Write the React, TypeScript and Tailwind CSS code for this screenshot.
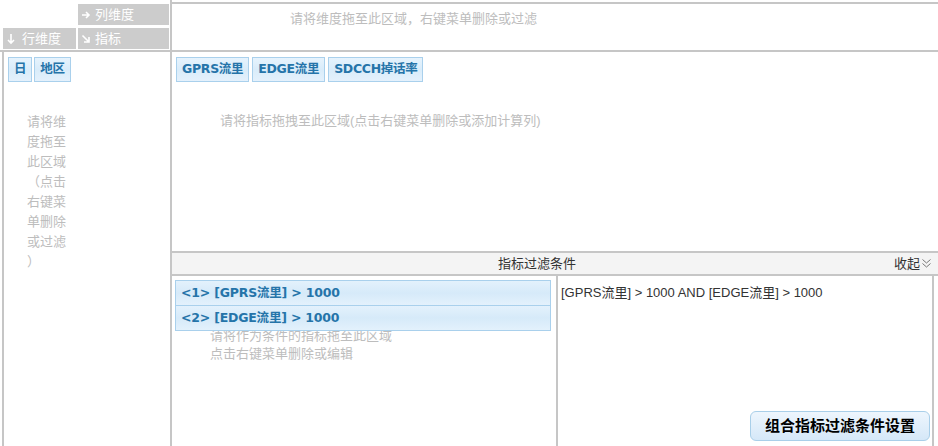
import React from "react"

const dims = ["日", "地区"]
const metrics = ["GPRS流里", "EDGE流里", "SDCCH掉话率"]
const conditions = ["<1> [GPRS流里] > 1000", "<2> [EDGE流里] > 1000"]
const rowHint = ["请将维", "度拖至", "此区域", "（点击", "右键菜", "单删除", "或过滤", "）"]

// light blue chip used for dimensions and metrics
const Chip: React.FC<{ label: string }> = ({ label }) => (
  <div className="h-[25px] px-[5px] flex items-center border border-[#a9d0ec] bg-gradient-to-b from-[#e6f3fd] via-[#d9ecfa] to-[#e4f1fc] font-['DejaVu_Sans','Noto_Sans_CJK_SC',sans-serif] text-[12.5px] tracking-[-0.3px] font-bold text-[#2574a9] leading-none">
    {label}
  </div>
)

const ArrowRight = () => (
  <svg width="10" height="10" viewBox="0 0 10 10" className="shrink-0">
    <path d="M1 5h7M5 2l3 3-3 3" stroke="#fff" strokeWidth="1.6" fill="none" />
  </svg>
)

const ArrowDown = () => (
  <svg width="10" height="12" viewBox="0 0 10 12" className="shrink-0">
    <path d="M5 1v9M2 7l3 3 3-3" stroke="#fff" strokeWidth="1.6" fill="none" />
  </svg>
)

const ArrowDiag = () => (
  <svg width="10" height="10" viewBox="0 0 10 10" className="shrink-0">
    <path d="M1.5 1.5l6 6M8 3v5H3" stroke="#fff" strokeWidth="1.6" fill="none" />
  </svg>
)

export default function App() {
  return (
    <div className="w-[938px] h-[446px] flex flex-col bg-white overflow-hidden font-['Liberation_Sans','Noto_Sans_CJK_SC',sans-serif] text-[13px] text-[#333]">
      {/* top: axis labels + column drop zone */}
      <div className="flex h-[52px] shrink-0 border-b-2 border-[#c6c6c6]">
        <div className="w-[170px] shrink-0 pl-[3px] pt-[4px] grid grid-cols-[73px_91px] grid-rows-[21px_21px] gap-x-[2px] gap-y-[3px] text-white">
          <div />
          <div className="bg-[#cccccc] flex items-center gap-[4px] pl-[3px]">
            <ArrowRight />
            <span>列维度</span>
          </div>
          <div className="bg-[#cccccc] flex items-center gap-[6px] pl-[3px]">
            <ArrowDown />
            <span>行维度</span>
          </div>
          <div className="bg-[#cccccc] flex items-center gap-[4px] pl-[3px]">
            <ArrowDiag />
            <span>指标</span>
          </div>
        </div>
        <div className="flex-1 border-l-2 border-[#c6c6c6]">
          <div className="mt-[2px] border-t-2 border-[#c6c6c6] pl-[118px] pt-[5px] text-[#bdbdbd]">
            请将维度拖至此区域，右键菜单删除或过滤
          </div>
        </div>
      </div>

      <div className="flex flex-1 min-h-0">
        {/* row dimensions */}
        <div className="ml-[2px] w-[170px] shrink-0 border-l-2 border-r-2 border-[#c6c6c6] pl-[4px] pt-[5px]">
          <div className="flex gap-[2px]">
            {dims.map((d) => (
              <Chip key={d} label={d} />
            ))}
          </div>
          <div className="mt-[30px] ml-[19px] leading-[20px] text-[#bdbdbd] whitespace-nowrap">
            {rowHint.map((l, i) => (
              <div key={i}>{l}</div>
            ))}
          </div>
        </div>

        <div className="flex-1 flex flex-col min-w-0">
          {/* metrics */}
          <div className="h-[199px] shrink-0 pl-[4px] pt-[5px]">
            <div className="flex gap-[3px]">
              {metrics.map((m) => (
                <Chip key={m} label={m} />
              ))}
            </div>
            <div className="mt-[29px] pl-[44px] text-[#bdbdbd]">
              请将指标拖拽至此区域(点击右键菜单删除或添加计算列)
            </div>
          </div>

          {/* filter header */}
          <div className="h-[25px] shrink-0 flex items-center border-t-2 border-b-2 border-[#c6c6c6] bg-[#f4f4f4]">
            <span className="ml-[326px] flex-1">指标过滤条件</span>
            <span className="flex items-center gap-[1px] mr-[6px]">
              收起
              <svg width="11" height="11" viewBox="0 0 11 11">
                <path d="M1.5 1.5l4 3.5 4-3.5M1.5 5.5l4 3.5 4-3.5" stroke="#777" strokeWidth="1" fill="none" />
              </svg>
            </span>
          </div>

          <div className="flex flex-1 min-h-0">
            {/* condition list */}
            <div className="w-[384px] shrink-0 pt-[4px] pl-[3px] pr-[5px]">
              <div className="relative z-10 flex flex-col">
                {conditions.map((c, i) => (
                  <div
                    key={c}
                    className={`h-[26px] flex items-center pl-[5px] border border-[#a9d0ec] bg-gradient-to-b from-[#e3f1fc] via-[#d6eaf9] to-[#e3f1fc] font-['DejaVu_Sans','Noto_Sans_CJK_SC',sans-serif] text-[12.5px] tracking-[-0.2px] font-bold text-[#2574a9] ${i > 0 ? "-mt-px" : ""}`}
                  >
                    {c}
                  </div>
                ))}
              </div>
              <div className="-mt-[4px] pl-[35px] leading-[18px] text-[#bdbdbd]">
                <div>请将作为条件的指标拖至此区域</div>
                <div>点击右键菜单删除或编辑</div>
              </div>
            </div>

            {/* combined expression */}
            <div className="w-[378px] shrink-0 border-l-2 border-r-2 border-[#c6c6c6] flex flex-col pl-[3px] pt-[7px] pr-[2px] pb-[5px]">
              <div className="text-[#333]">[GPRS流里] &gt; 1000 AND [EDGE流里] &gt; 1000</div>
              <div className="flex-1" />
              <div className="flex justify-end">
                <button className="w-[180px] h-[30px] rounded-[6px] border border-[#a9cfe9] bg-gradient-to-b from-[#eef6fd] to-[#d5e8f8] text-[15px] font-bold text-black">
                  组合指标过滤条件设置
                </button>
              </div>
            </div>
          </div>
        </div>
      </div>
    </div>
  )
}
